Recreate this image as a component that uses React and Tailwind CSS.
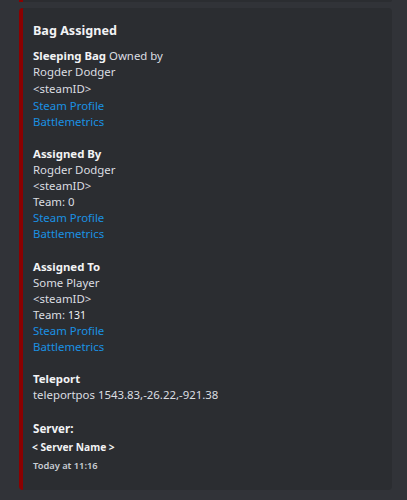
export default function App() {
  const link = "text-[#1a91e3]";
  const val = "text-[#dbdee1]";
  const name = "font-bold text-[#f2f3f5]";
  return (
    <div
      className="min-h-[500px] w-[407px] bg-[#313338] pl-[19px] pr-[15px]"
      style={{ fontFamily: '"Noto Sans", "Open Sans", sans-serif' }}
    >
      <div className="h-[2px] rounded-br bg-[#2b2d31] border-l-4 border-l-[#8b0000]" />
      <div className="mt-[6px] flex flex-col rounded-[4px] border-l-4 border-l-[#8b0000] bg-[#2b2d31] pl-[10px] pr-4 pt-[14px] pb-[17px]">
        <div className="text-[12.6px] leading-[18px] font-bold text-[#f2f3f5]">Bag Assigned</div>

        <div className="mt-[7.5px] flex flex-col text-[11.4px] leading-[16.67px]">
          <div className={val}>
            <span className={name}>Sleeping Bag</span> Owned by
          </div>
          <div className={val}>Rogder Dodger</div>
          <div className={val}>&lt;steamID&gt;</div>
          <div className={link}>Steam Profile</div>
          <div className={link}>Battlemetrics</div>
        </div>

        <div className="mt-[15px] flex flex-col text-[11.4px] leading-[16px]">
          <div className={name}>Assigned By</div>
          <div className={val}>Rogder Dodger</div>
          <div className={val}>&lt;steamID&gt;</div>
          <div className={val}>Team: 0</div>
          <div className={link}>Steam Profile</div>
          <div className={link}>Battlemetrics</div>
        </div>

        <div className="mt-[17px] flex flex-col text-[11.4px] leading-[16px]">
          <div className={name}>Assigned To</div>
          <div className={val}>Some Player</div>
          <div className={val}>&lt;steamID&gt;</div>
          <div className={val}>
            Team: <span className="text-[10.5px] text-[#f2f3f5]">131</span>
          </div>
          <div className={link}>Steam Profile</div>
          <div className={link}>Battlemetrics</div>
        </div>

        <div className="mt-[16px] flex flex-col text-[11.4px] leading-[16px]">
          <div className={name}>Teleport</div>
          <div className={val}>teleportpos 1543.83,-26.22,-921.38</div>
        </div>

        <div className="mt-[18px] text-[11.6px] leading-[16px] font-bold text-[#f2f3f5]">Server:</div>
        <div className="-ml-[1px] mt-[3px] text-[10.2px] leading-[14px] font-bold text-[#f2f3f5]">
          &lt; Server Name &gt;
        </div>
        <div className="mt-[5px] text-[9.3px] leading-[14px] font-semibold text-[#c9cdd4]">Today at 11:16</div>
      </div>
    </div>
  );
}
